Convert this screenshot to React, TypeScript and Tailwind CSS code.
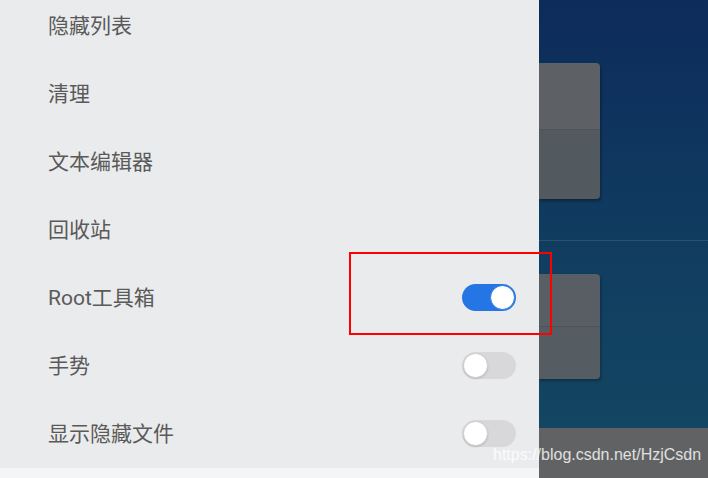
import React from 'react'

const items = [
  { label: '隐藏列表' },
  { label: '清理' },
  { label: '文本编辑器' },
  { label: '回收站' },
  { label: 'Root工具箱', toggle: true, on: true },
  { label: '手势', toggle: true, on: false },
  { label: '显示隐藏文件', toggle: true, on: false },
]

function Toggle({ on }: { on: boolean }) {
  if (on) {
    return (
      <div className="-mt-[3px] flex h-[27px] w-[54px] items-center justify-end rounded-full bg-[#2576e4] pr-[1px]">
        <div className="h-[25px] w-[25px] rounded-full border border-[#2a7ae6] bg-white" />
      </div>
    )
  }
  return (
    <div className="-mt-[3px] flex h-[27px] w-[54px] items-center rounded-full bg-[#d8d8da] pl-[1px]">
      <div className="h-[25px] w-[25px] rounded-full border border-[#cfcfd1] bg-white shadow-[0_1px_2px_rgba(0,0,0,0.15)]" />
    </div>
  )
}

export default function App() {
  return (
    <div
      className="relative flex h-[478px] w-[708px] overflow-hidden"
      style={{ fontFamily: 'Roboto, "Noto Sans CJK SC", sans-serif' }}
    >
      {/* Drawer */}
      <div className="z-10 flex w-[539px] flex-col bg-[#eaebed]">
        <div className="h-[468px] overflow-hidden">
          <div className="-mt-[7px]">
            {items.map(item => (
              <div key={item.label} className="flex h-[68px] items-center justify-between pl-[48px] pr-[23px]">
                <span className="text-[21px] text-[#5a5a5a]">{item.label}</span>
                {item.toggle && <Toggle on={!!item.on} />}
              </div>
            ))}
          </div>
        </div>
        <div className="flex-1 bg-[#f4f5f7]" />
      </div>

      {/* Background screen */}
      <div className="flex flex-1 flex-col bg-gradient-to-b from-[#0d2b5b] via-[#103c60] to-[#144963]">
        <div className="h-[240px] pt-[63px]">
          <div className="w-[61px] rounded-r-[4px] shadow-[1px_2px_3px_rgba(0,0,0,0.35)]">
            <div className="h-[67px] rounded-tr-[4px] border-b border-[#4d535a] bg-[#5d6166]" />
            <div className="h-[69px] rounded-br-[4px] bg-[#52595f]" />
          </div>
        </div>
        <div className="h-px bg-[#2a4f70]" />
        <div className="flex-1 pt-[33px]">
          <div className="w-[61px] rounded-r-[4px] shadow-[1px_2px_3px_rgba(0,0,0,0.3)]">
            <div className="h-[53px] rounded-tr-[4px] border-b border-[#4b535a] bg-[#585e64]" />
            <div className="h-[52px] rounded-br-[4px] bg-[#555c62]" />
          </div>
        </div>
        <div className="h-[50px] bg-[#606263]" />
      </div>

      {/* Highlight box */}
      <div className="absolute left-[349px] top-[252px] z-20 h-[83px] w-[203px] border-2 border-[#ff0000]" />

      {/* Watermark */}
      <div
        className="absolute left-[493px] top-[445px] z-20 text-[16px] leading-[20px] text-white/80"
        style={{ fontFamily: '"Liberation Sans", Arial, sans-serif' }}
      >
        https://blog.csdn.net/HzjCsdn
      </div>
    </div>
  )
}
